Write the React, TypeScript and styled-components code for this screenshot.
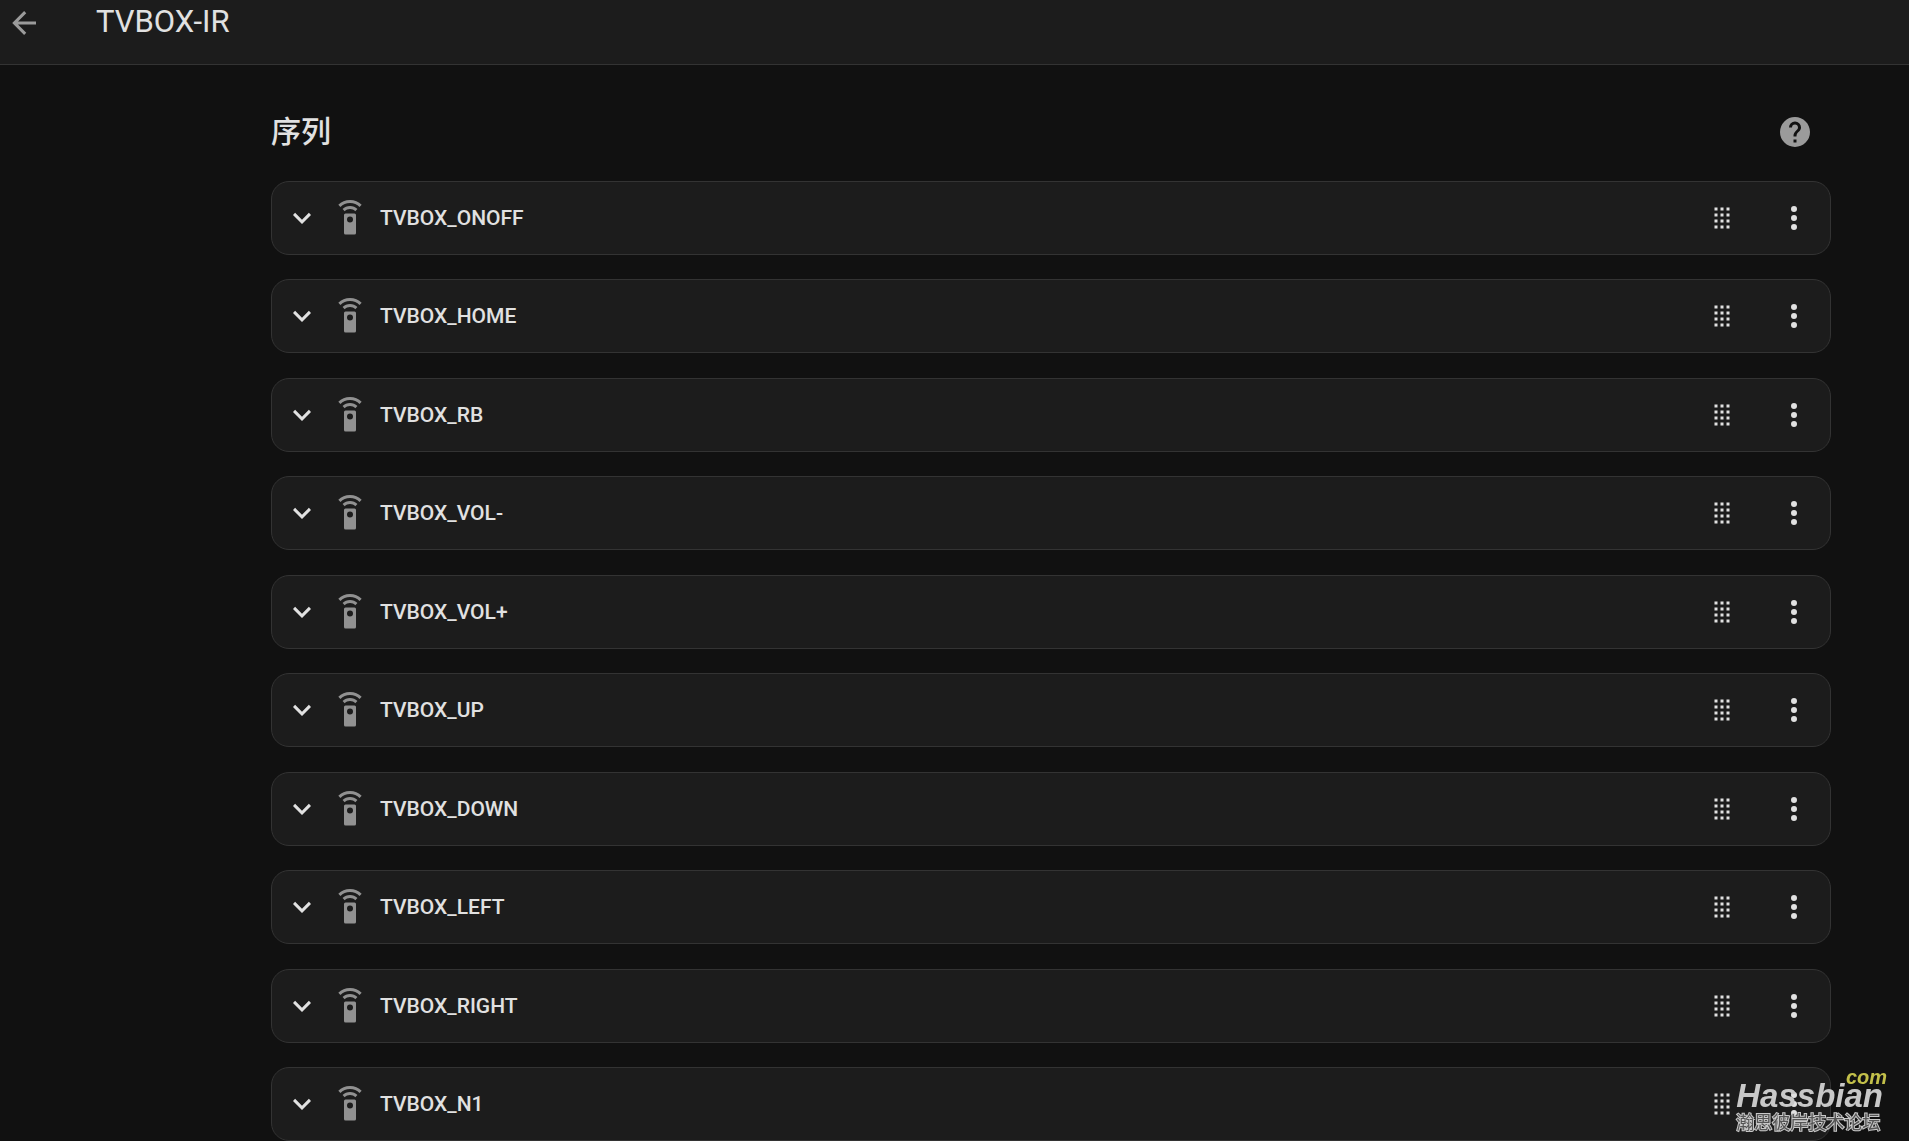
import React from "react";
import styled, { createGlobalStyle } from "styled-components";

const GlobalStyle = createGlobalStyle`
  *, *::before, *::after { box-sizing: border-box; }
  body {
    margin: 0;
    background: #111111;
    color: #e1e1e1;
    font-family: Roboto, "Noto Sans CJK SC", sans-serif;
  }
`;

const ICONS = {
  back: "M20,11V13H8L13.5,18.5L12.08,19.92L4.16,12L12.08,4.08L13.5,5.5L8,11H20Z",
  help: "M15.07,11.25L14.17,12.17C13.45,12.89 13,13.5 13,15H11V14.5C11,13.39 11.45,12.39 12.17,11.67L13.41,10.41C13.78,10.05 14,9.55 14,9C14,7.89 13.1,7 12,7A2,2 0 0,0 10,9H8A4,4 0 0,1 12,5A4,4 0 0,1 16,9C16,9.88 15.64,10.67 15.07,11.25M13,19H11V17H13M12,2A10,10 0 0,0 2,12A10,10 0 0,0 12,22A10,10 0 0,0 22,12C22,6.47 17.5,2 12,2Z",
  chevron: "M7.41,8.58L12,13.17L16.59,8.58L18,10L12,16L6,10L7.41,8.58Z",
  remote:
    "M12,0C8.96,0 6.21,1.23 4.22,3.22L5.63,4.63C7.26,3 9.5,2 12,2C14.5,2 16.74,3 18.36,4.64L19.77,3.23C17.79,1.23 15.04,0 12,0M7.05,6.05L8.46,7.46C9.37,6.56 10.62,6 12,6C13.38,6 14.63,6.56 15.54,7.46L16.95,6.05C15.68,4.78 13.93,4 12,4C10.07,4 8.32,4.78 7.05,6.05M12,15A2,2 0 0,1 10,13A2,2 0 0,1 12,11A2,2 0 0,1 14,13A2,2 0 0,1 12,15M15,9H9A1,1 0 0,0 8,10V22A1,1 0 0,0 9,23H15A1,1 0 0,0 16,22V10A1,1 0 0,0 15,9Z",
  drag: "M7,5H9V7H7V5M11,5H13V7H11V5M15,5H17V7H15V5M7,9H9V11H7V9M11,9H13V11H11V9M15,9H17V11H15V9M7,13H9V15H7V13M11,13H13V15H11V13M15,13H17V15H15V13M7,17H9V19H7V17M11,17H13V19H11V17M15,17H17V19H15V17Z",
  more: "M12,16A2,2 0 0,1 14,18A2,2 0 0,1 12,20A2,2 0 0,1 10,18A2,2 0 0,1 12,16M12,10A2,2 0 0,1 14,12A2,2 0 0,1 12,14A2,2 0 0,1 10,12A2,2 0 0,1 12,10M12,4A2,2 0 0,1 14,6A2,2 0 0,1 12,8A2,2 0 0,1 10,6A2,2 0 0,1 12,4Z",
};

const Svg = styled.svg`
  display: block;
  width: 36px;
  height: 36px;
  flex: none;
  fill: currentColor;
`;

function Icon({ name }: { name: keyof typeof ICONS }) {
  return (
    <Svg viewBox="0 0 24 24" aria-hidden="true">
      <path d={ICONS[name]} />
    </Svg>
  );
}

const Page = styled.div`
  display: flex;
  flex-direction: column;
  min-height: 100vh;
`;

const Toolbar = styled.header`
  display: flex;
  align-items: flex-start;
  gap: 54px;
  padding: 5px 6px 23px;
  background: #1c1c1c;
  border-bottom: 1px solid #333333;
`;

const Title = styled.h1`
  margin: 0;
  font-size: 31px;
  font-weight: 400;
  line-height: 34px;
`;

const IconButton = styled.button<{ $muted?: boolean }>`
  display: block;
  padding: 0;
  border: 0;
  background: none;
  color: ${(p) => (p.$muted ? "#9b9b9b" : "#e1e1e1")};
  cursor: pointer;
`;

const Main = styled.main`
  display: flex;
  flex: 1;
  flex-direction: column;
  padding: 48px 78px 0 271px;
`;

const SectionHead = styled.div`
  display: flex;
  align-items: center;
  justify-content: space-between;
  padding: 0 18px 30px 0;
`;

const SectionTitle = styled.h2`
  margin: 0;
  font-size: 30px;
  font-weight: 500;
  line-height: 38px;
`;

const List = styled.ul`
  display: flex;
  flex: 1;
  flex-direction: column;
  justify-content: space-between;
  gap: 24px;
  margin: 0;
  padding: 0;
  list-style: none;
`;

const Row = styled.li`
  display: flex;
  align-items: center;
  gap: 12px;
  padding: 18px 18px 18px 12px;
  background: #1c1c1c;
  border: 1px solid #333333;
  border-radius: 18px;
`;

const RemoteIcon = styled.span`
  color: #919191;
`;

const Name = styled.h3`
  flex: 1;
  margin: 0;
  font-size: 21px;
  font-weight: 500;
  line-height: 36px;
`;

const Actions = styled.div`
  display: flex;
  gap: 36px;
`;

const Watermark = styled.div`
  position: fixed;
  right: 22px;
  bottom: 6px;
  display: flex;
  flex-direction: column;
  font-family: "Liberation Sans", "Noto Sans CJK SC", sans-serif;
  font-weight: 700;
  pointer-events: none;
`;

const Domain = styled.span`
  align-self: flex-end;
  color: #c3c04a;
  font-size: 20px;
  font-style: italic;
  line-height: 8px;
`;

const Brand = styled.span`
  padding-right: 4px;
  color: #c8c8c8;
  font-size: 33px;
  font-style: italic;
  line-height: 30px;
`;

const Slogan = styled.span`
  color: #555555;
  font-size: 18px;
  font-weight: 400;
  line-height: 24px;
  -webkit-text-stroke: 2px #c8c8c8;
  paint-order: stroke fill;
`;

const names = [
  "TVBOX_ONOFF",
  "TVBOX_HOME",
  "TVBOX_RB",
  "TVBOX_VOL-",
  "TVBOX_VOL+",
  "TVBOX_UP",
  "TVBOX_DOWN",
  "TVBOX_LEFT",
  "TVBOX_RIGHT",
  "TVBOX_N1",
];

export default function App() {
  return (
    <Page lang="zh-CN">
      <GlobalStyle />
      <Toolbar>
        <IconButton type="button" $muted aria-label="返回">
          <Icon name="back" />
        </IconButton>
        <Title>TVBOX-IR</Title>
      </Toolbar>
      <Main>
        <SectionHead>
          <SectionTitle>序列</SectionTitle>
          <IconButton type="button" $muted aria-label="帮助">
            <Icon name="help" />
          </IconButton>
        </SectionHead>
        <List>
          {names.map((name) => (
            <Row key={name}>
              <IconButton type="button" aria-label={`展开 ${name}`}>
                <Icon name="chevron" />
              </IconButton>
              <RemoteIcon>
                <Icon name="remote" />
              </RemoteIcon>
              <Name>{name}</Name>
              <Actions>
                <IconButton type="button" aria-label={`移动 ${name}`}>
                  <Icon name="drag" />
                </IconButton>
                <IconButton type="button" aria-label={`菜单 ${name}`}>
                  <Icon name="more" />
                </IconButton>
              </Actions>
            </Row>
          ))}
        </List>
      </Main>
      <Watermark>
        <Domain>com</Domain>
        <Brand>Hassbian</Brand>
        <Slogan>瀚思彼岸技术论坛</Slogan>
      </Watermark>
    </Page>
  );
}
